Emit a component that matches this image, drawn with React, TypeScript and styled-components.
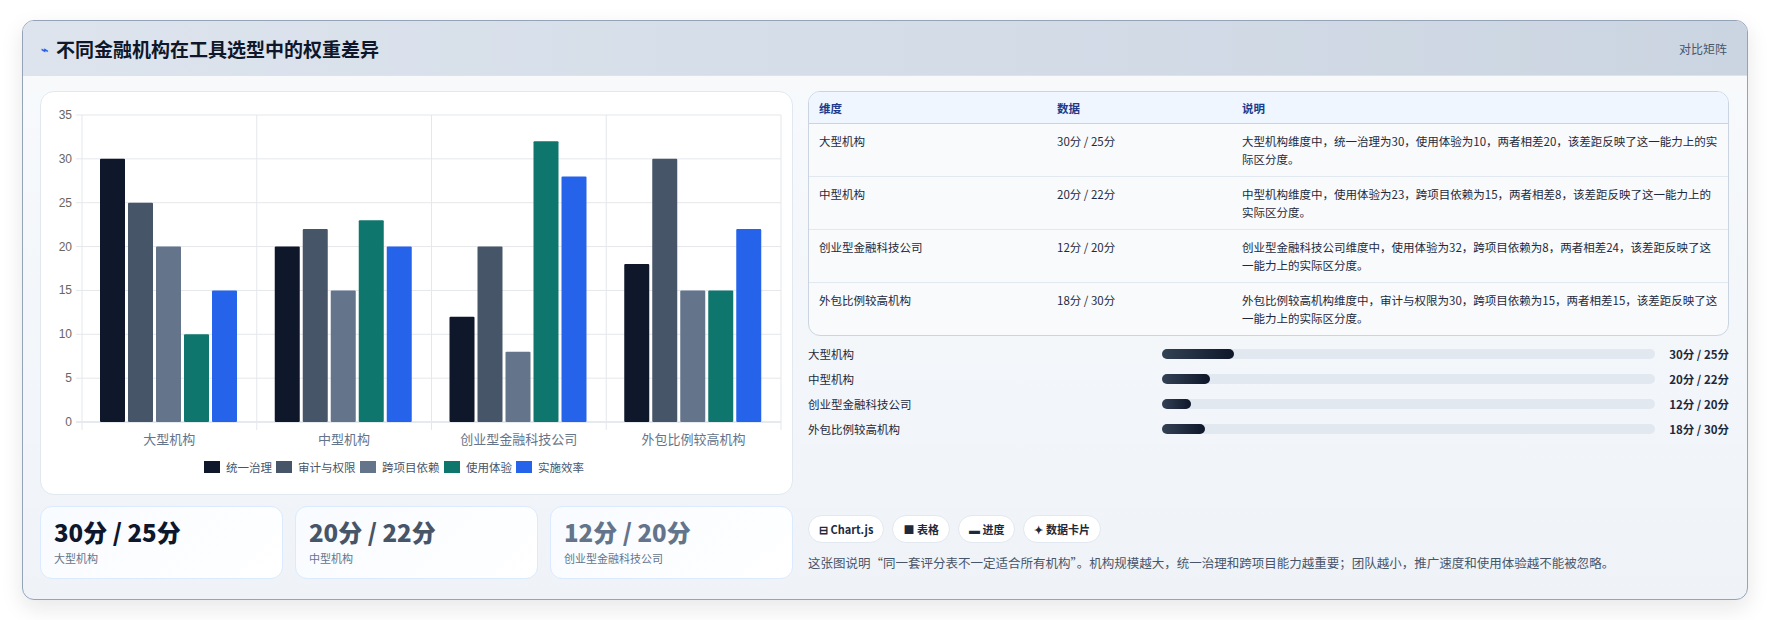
import React from "react";
import styled, { createGlobalStyle } from "styled-components";

const Global = createGlobalStyle`
  body { margin: 0; background: #ffffff; font-family: "Noto Sans CJK SC", "Noto Sans", sans-serif; }
`;

const Page = styled.div`
  padding: 20px 20px 20px 22px;
`;

const Card = styled.div`
  border: 1px solid #94a3b8;
  border-radius: 12px;
  overflow: hidden;
  background: linear-gradient(180deg, #f8fafc, #eff3f8);
  box-shadow: 0 8px 22px rgba(15, 23, 42, 0.1);
  height: 578px;
  display: flex;
  flex-direction: column;
`;

const Header = styled.div`
  height: 54px;
  flex: none;
  display: flex;
  align-items: center;
  justify-content: space-between;
  padding: 0 20px 0 18px;
  background: linear-gradient(90deg, #dde4ee, #cbd5e1);
  border-bottom: 1px solid #dbe3ec;
`;

const Title = styled.h2`
  margin: 0;
  font-size: 19px;
  font-weight: 700;
  color: #0f172a;
  display: flex;
  align-items: center;
  gap: 8px;
`;

const Bolt = styled.span`
  color: #2563eb;
  font-size: 12px;
`;

const HeaderTag = styled.span`
  font-size: 12px;
  color: #475569;
`;

const Body = styled.div`
  flex: 1;
  display: grid;
  grid-template-columns: 753px 1fr;
  gap: 15px;
  padding: 15px 18px 0 17px;
`;

const Left = styled.div`
  display: flex;
  flex-direction: column;
  gap: 11px;
`;

const ChartCard = styled.div`
  height: 404px;
  background: #ffffff;
  border: 1px solid #e2e8f0;
  border-radius: 14px;
  box-sizing: border-box;
`;

const Stats = styled.div`
  display: grid;
  grid-template-columns: repeat(3, 1fr);
  gap: 12px;
`;

const Stat = styled.div`
  height: 73px;
  box-sizing: border-box;
  border: 1px solid #dbeafe;
  border-radius: 12px;
  background: linear-gradient(135deg, #f8fbff, #ffffff);
  padding: 10px 13px;
`;

const StatValue = styled.div<{ $c: string }>`
  font-size: 24px;
  font-weight: 800;
  line-height: 30px;
  color: ${(p) => p.$c};
`;

const StatLabel = styled.div`
  font-size: 11px;
  color: #64748b;
  margin-top: 3px;
`;

const Right = styled.div`
  display: flex;
  flex-direction: column;
`;

const Table = styled.table`
  width: 100%;
  table-layout: fixed;
  border-collapse: separate;
  border-spacing: 0;
  border: 1px solid #cbd5e1;
  border-radius: 12px;
  overflow: hidden;
  background: #f8fafc;
  font-size: 11.5px;
  color: #1e293b;
`;

const Th = styled.th<{ $w?: number }>`
  text-align: left;
  font-weight: 600;
  color: #1e3a8a;
  background: #eff6ff;
  height: 31px;
  padding: 0 10px;
  border-bottom: 1px solid #cbd5e1;
  width: ${(p) => (p.$w ? `${p.$w}px` : "auto")};
`;

const Td = styled.td<{ $last?: boolean }>`
  vertical-align: top;
  padding: 8px 10px 8px;
  line-height: 18px;
  height: 28px;
  border-bottom: ${(p) => (p.$last ? "none" : "1px solid #e2e8f0")};
`;

const Bars = styled.div`
  display: flex;
  flex-direction: column;
  gap: 8px;
  margin-top: 9px;
`;

const BarRow = styled.div`
  display: grid;
  grid-template-columns: 354px 1fr 74px;
  align-items: center;
  height: 17px;
  font-size: 11.5px;
  color: #1e293b;
`;

const Track = styled.div`
  height: 10px;
  border-radius: 5px;
  background: #e2e8f0;
`;

const Fill = styled.div`
  height: 100%;
  border-radius: 5px;
  background: linear-gradient(90deg, #334155, #0f172a);
`;

const BarValue = styled.span`
  text-align: right;
  font-weight: 700;
  font-size: 11.5px;
`;

const Chips = styled.div`
  display: flex;
  gap: 8px;
  margin-top: 78px;
`;

const Chip = styled.span`
  height: 28px;
  box-sizing: border-box;
  padding: 0 10px;
  display: inline-flex;
  align-items: center;
  gap: 3px;
  border: 1px solid #e2e8f0;
  border-radius: 14px;
  background: #ffffff;
  font-size: 11px;
  font-weight: 600;
  color: #1e293b;
`;

const Note = styled.p`
  margin: 10px 0 0;
  font-size: 12.5px;
  color: #475569;
`;

const cats = ["大型机构", "中型机构", "创业型金融科技公司", "外包比例较高机构"];
const series = [
  { name: "统一治理", color: "#0f172a" },
  { name: "审计与权限", color: "#475569" },
  { name: "跨项目依赖", color: "#64748b" },
  { name: "使用体验", color: "#0f766e" },
  { name: "实施效率", color: "#2563eb" },
];
const data = [
  [30, 25, 20, 10, 15],
  [20, 22, 15, 23, 20],
  [12, 20, 8, 32, 28],
  [18, 30, 15, 15, 22],
];

function Chart() {
  const L = 41, R = 740, T = 23, B = 330;
  const cw = (R - L) / 4;
  const y = (v: number) => B - (v / 35) * (B - T);
  const legendW = [72, 84, 84, 72, 72];
  let lx = 163;
  return (
    <svg width="751" height="402" viewBox="0 0 751 402">
      {[0, 5, 10, 15, 20, 25, 30, 35].map((v) => (
        <g key={v}>
          <line x1={L - 6} x2={R} y1={y(v)} y2={y(v)} stroke={v === 0 ? "#cbd5e1" : "#e5e7eb"} />
          <text x={L - 10} y={y(v) + 4} fontSize="12" fill="#666" textAnchor="end" fontFamily="Liberation Sans, sans-serif">{v}</text>
        </g>
      ))}
      {[0, 1, 2, 3, 4].map((i) => (
        <line key={i} x1={L + i * cw} x2={L + i * cw} y1={T} y2={B + 8} stroke="#e5e7eb" />
      ))}
      {data.map((row, ci) =>
        row.map((v, si) => (
          <rect key={`${ci}-${si}`} x={L + ci * cw + 18 + si * 28} y={y(v)} width={25} height={B - y(v)} fill={series[si].color} rx="1" />
        ))
      )}
      {cats.map((c, i) => (
        <text key={c} x={L + i * cw + cw / 2} y={352} fontSize="13" fill="#64748b" textAnchor="middle">{c}</text>
      ))}
      {series.map((s, i) => {
        const x = lx;
        lx += legendW[i];
        return (
          <g key={s.name}>
            <rect x={x} y={369} width={16} height={12} fill={s.color} />
            <text x={x + 22} y={380} fontSize="11.5" fill="#475569">{s.name}</text>
          </g>
        );
      })}
    </svg>
  );
}

const rows = [
  ["大型机构", "30分 / 25分", "大型机构维度中，统一治理为30，使用体验为10，两者相差20，该差距反映了这一能力上的实际区分度。", 30],
  ["中型机构", "20分 / 22分", "中型机构维度中，使用体验为23，跨项目依赖为15，两者相差8，该差距反映了这一能力上的实际区分度。", 20],
  ["创业型金融科技公司", "12分 / 20分", "创业型金融科技公司维度中，使用体验为32，跨项目依赖为8，两者相差24，该差距反映了这一能力上的实际区分度。", 12],
  ["外包比例较高机构", "18分 / 30分", "外包比例较高机构维度中，审计与权限为30，跨项目依赖为15，两者相差15，该差距反映了这一能力上的实际区分度。", 18],
] as const;

export default function App() {
  return (
    <>
      <Global />
      <Page>
        <Card>
          <Header>
            <Title><Bolt>⌁</Bolt>不同金融机构在工具选型中的权重差异</Title>
            <HeaderTag>对比矩阵</HeaderTag>
          </Header>
          <Body>
            <Left>
              <ChartCard><Chart /></ChartCard>
              <Stats>
                <Stat><StatValue $c="#0f172a">30分 / 25分</StatValue><StatLabel>大型机构</StatLabel></Stat>
                <Stat><StatValue $c="#475569">20分 / 22分</StatValue><StatLabel>中型机构</StatLabel></Stat>
                <Stat><StatValue $c="#64748b">12分 / 20分</StatValue><StatLabel>创业型金融科技公司</StatLabel></Stat>
              </Stats>
            </Left>
            <Right>
              <Table>
                <thead>
                  <tr><Th $w={218}>维度</Th><Th $w={165}>数据</Th><Th>说明</Th></tr>
                </thead>
                <tbody>
                  {rows.map((r, i) => (
                    <tr key={r[0]}>
                      <Td $last={i === 3}>{r[0]}</Td>
                      <Td $last={i === 3}>{r[1]}</Td>
                      <Td $last={i === 3}>{r[2]}</Td>
                    </tr>
                  ))}
                </tbody>
              </Table>
              <Bars>
                {rows.map((r) => (
                  <BarRow key={r[0]}>
                    <span>{r[0]}</span>
                    <Track><Fill style={{ width: `${(r[3] / 205) * 100}%` }} /></Track>
                    <BarValue>{r[1]}</BarValue>
                  </BarRow>
                ))}
              </Bars>
              <Chips>
                <Chip>⊟ Chart.js</Chip>
                <Chip>■ 表格</Chip>
                <Chip>▬ 进度</Chip>
                <Chip>✦ 数据卡片</Chip>
              </Chips>
              <Note>这张图说明“同一套评分表不一定适合所有机构”。机构规模越大，统一治理和跨项目能力越重要；团队越小，推广速度和使用体验越不能被忽略。</Note>
            </Right>
          </Body>
        </Card>
      </Page>
    </>
  );
}
